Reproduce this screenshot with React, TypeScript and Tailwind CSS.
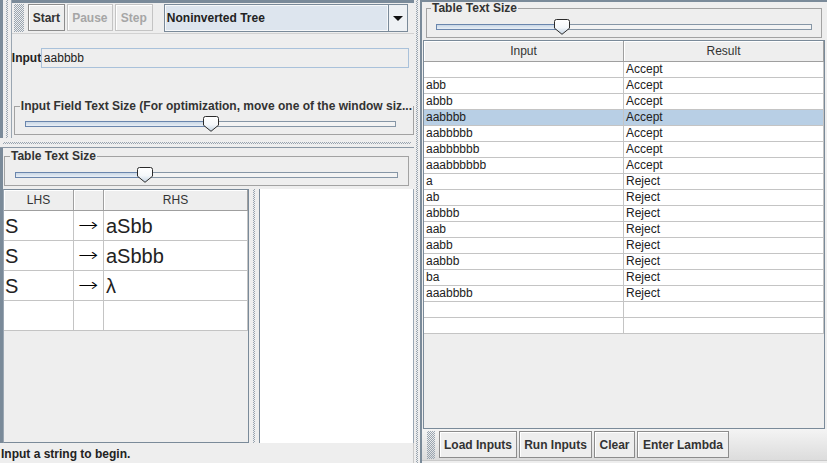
import React from "react";

function Bumps({ className }: { className: string }) {
  return (
    <div
      className={
        "bg-[repeating-conic-gradient(#98a4b0_0%_25%,transparent_0%_50%)] bg-[length:2px_2px] " +
        className
      }
    />
  );
}

function Thumb({ id }: { id: string }) {
  return (
    <svg width="16" height="16" viewBox="0 0 16 16">
      <defs>
        <linearGradient id={id} x1="0" y1="0" x2="0" y2="1">
          <stop offset="0" stopColor="#ffffff" />
          <stop offset="0.55" stopColor="#f4f7fa" />
          <stop offset="1" stopColor="#c3d3e3" />
        </linearGradient>
      </defs>
      <path
        d="M2.5 0.5 H13.5 Q15.5 0.5 15.5 2.5 V9.2 L8 15.3 L0.5 9.2 V2.5 Q0.5 0.5 2.5 0.5 Z"
        fill={`url(#${id})`}
        stroke="#2b2b2b"
        strokeWidth="1"
      />
    </svg>
  );
}

function Slider({ width, pos, id }: { width: number; pos: number; id: string }) {
  return (
    <div className="relative h-[16px]" style={{ width }}>
      <div className="absolute left-0 right-0 top-[5px] h-[6px] flex">
        <div
          className="h-full border border-r-0 border-[#6a86ad] bg-[linear-gradient(#c9d7e6,#e9eff6)]"
          style={{ width: pos + 8 }}
        />
        <div className="h-full flex-1 border border-l-0 border-[#8696a6] bg-[#f3f3f3]" />
      </div>
      <div className="absolute top-0" style={{ left: pos }}>
        <Thumb id={id} />
      </div>
    </div>
  );
}

function Btn({
  label,
  width,
  disabled,
}: {
  label: string;
  width: number;
  disabled?: boolean;
}) {
  return (
    <div
      className={
        disabled
          ? "h-[27px] flex items-center justify-center border border-[#c4c4c4] bg-[#eeeeee] font-bold text-[#a6a6a6] shadow-[inset_1px_1px_0_#ffffff]"
          : "h-[27px] flex items-center justify-center border border-[#8c8c8c] bg-[#eeeeee] font-bold text-[#333333] shadow-[inset_1px_1px_0_#ffffff]"
      }
      style={{ width }}
    >
      {label}
    </div>
  );
}

function TitledBox({
  title,
  className,
  legendClass,
  children,
}: {
  title: string;
  className: string;
  legendClass: string;
  children: React.ReactNode;
}) {
  return (
    <fieldset className={"border border-[#a2a2a2] pb-[2px] " + className}>
      <legend className={"px-[1px] font-bold whitespace-nowrap text-[#333333] " + legendClass}>
        {title}
      </legend>
      {children}
    </fieldset>
  );
}

const rows: [string, string][] = [
  ["", "Accept"],
  ["abb", "Accept"],
  ["abbb", "Accept"],
  ["aabbbb", "Accept"],
  ["aabbbbb", "Accept"],
  ["aabbbbbb", "Accept"],
  ["aaabbbbbb", "Accept"],
  ["a", "Reject"],
  ["ab", "Reject"],
  ["abbbb", "Reject"],
  ["aab", "Reject"],
  ["aabb", "Reject"],
  ["aabbb", "Reject"],
  ["ba", "Reject"],
  ["aaabbbb", "Reject"],
  ["", ""],
  ["", ""],
];

const grammar: [string, string, string][] = [
  ["S", "→", "aSbb"],
  ["S", "→", "aSbbb"],
  ["S", "→", "λ"],
  ["", "", ""],
];

export default function App() {
  return (
    <div className="w-[827px] h-[463px] bg-[#eeeeee] flex overflow-hidden text-[#333333] font-['Liberation_Sans',Arial,sans-serif] text-[12px] leading-[14px]">
      {/* LEFT COLUMN */}
      <div className="w-[414px] flex flex-col">
        {/* upper panel */}
        <div className="h-[138px] flex">
          <div className="w-[3px] bg-[#7a8a99]" />
          <div className="w-[9px] flex justify-center">
            <Bumps className="w-[2px] h-full" />
          </div>
          <div className="w-[1px] bg-[#9aa6b2]" />
          <div className="flex-1 flex flex-col border-t-[3px] border-[#7a8a99]">
            {/* toolbar */}
            <div className="h-[31px] flex items-start pt-[1px] pl-[2px] border-b border-[#d2d2d2]">
              <Bumps className="w-[10px] h-[28px]" />
              <div className="ml-[4px] flex gap-[2px]">
                <Btn label="Start" width={37} />
                <Btn label="Pause" width={46} disabled />
                <Btn label="Step" width={38} disabled />
              </div>
              <div className="ml-[11px] w-[244px] h-[28px] border border-[#7a8a99] flex bg-[#eeeeee]">
                <div className="flex-1 flex items-center pl-[1px] border border-[#f6f8fa] bg-[#dde5ee] font-bold text-[#222222]">
                  Noninverted Tree
                </div>
                <div className="w-[19px] border-l border-[#7a8a99] flex items-center justify-center bg-[#eef1f4]">
                  <svg width="10" height="5" viewBox="0 0 10 5">
                    <path d="M0 0H10L5 5Z" fill="#111111" />
                  </svg>
                </div>
              </div>
            </div>
            {/* input row */}
            <div className="mt-[14px] flex items-center h-[20px]">
              <div className="w-[29px] font-bold text-[#222222]">Input</div>
              <div className="w-[368px] h-[20px] border border-[#a9c1da] flex items-center pl-[2px] text-[#222222]">
                aabbbb
              </div>
            </div>
            <TitledBox
              title="Input Field Text Size (For optimization, move one of the window siz..."
              className="mt-[31px] ml-[2px] w-[392px]"
              legendClass="ml-[5px]"
            >
              <div className="mt-[3px] pl-[10px]">
                <Slider width={371} pos={178} id="t1" />
              </div>
            </TitledBox>
          </div>
        </div>
        {/* horizontal split divider */}
        <div className="h-[9px] flex items-center px-[3px]">
          <Bumps className="h-[2px] w-full" />
        </div>
        <div className="h-[1px] bg-[#8a97a4]" />
        {/* lower panel */}
        <div className="flex-1 flex">
          <div className="w-[3px] bg-[#7a8a99]" />
          <div className="flex-1 flex flex-col">
            <TitledBox
              title="Table Text Size"
              className="mt-[1px] ml-[1px] w-[405px]"
              legendClass="ml-[5px]"
            >
              <div className="mt-[4px] pl-[10px]">
                <Slider width={383} pos={122} id="t2" />
              </div>
            </TitledBox>
            <div className="mt-[3px] flex-1 flex">
              {/* grammar table */}
              <div className="w-[246px] border border-[#7a8a99] border-l-[#9aa6b2] flex flex-col">
                <div className="grid grid-cols-[70px_30px_144px] h-[21px]">
                  <div className="flex items-center justify-center border-r border-b border-[#9f9f9f] shadow-[inset_1px_1px_0_#ffffff]">
                    LHS
                  </div>
                  <div className="border-r border-b border-[#9f9f9f] shadow-[inset_1px_1px_0_#ffffff]" />
                  <div className="flex items-center justify-center border-r border-b border-[#9f9f9f] shadow-[inset_1px_1px_0_#ffffff]">
                    RHS
                  </div>
                </div>
                {grammar.map((g, i) => (
                  <div
                    key={i}
                    className="grid grid-cols-[70px_30px_144px] h-[30px] bg-white text-[20px] leading-[24px] text-[#222222]"
                  >
                    <div className="flex items-center pl-[1px] border-r border-b border-[#c4c4c4]">
                      {g[0]}
                    </div>
                    <div className="flex items-center pl-[4px] border-r border-b border-[#c4c4c4] overflow-hidden">
                      <span className="inline-block origin-left scale-x-[1.35] font-['DejaVu_Sans',sans-serif] font-extralight text-[18px] leading-[24px] text-black -translate-y-[1px]">
                        {g[1]}
                      </span>
                    </div>
                    <div className="flex items-center pl-[2px] border-r border-b border-[#c4c4c4]">
                      {g[2]}
                    </div>
                  </div>
                ))}
              </div>
              {/* vertical split divider */}
              <div className="w-[10px] flex justify-center">
                <Bumps className="w-[2px] h-full" />
              </div>
              <div className="w-[1px] bg-[#7a8a99]" />
              <div className="flex-1 bg-white border-r border-[#9aa6b2]" />
            </div>
          </div>
        </div>
        {/* status bar */}
        <div className="h-[20px] pt-[4px] pl-[1px] font-bold text-[#222222] whitespace-nowrap border-r border-[#c8c8c8]">
          Input a string to begin.
        </div>
      </div>

      {/* main split divider */}
      <div className="w-[6px] flex justify-center">
        <Bumps className="w-[2px] h-full" />
      </div>
      <div className="w-[2px] bg-[#7a8a99]" />

      {/* RIGHT COLUMN */}
      <div className="flex-1 flex flex-col">
        <div className="h-[2px] bg-[#7a8a99]" />
        <TitledBox
          title="Table Text Size"
          className="ml-[4px] w-[396px]"
          legendClass="ml-[4px] leading-[13px]"
        >
          <div className="mt-[4px] pl-[9px]">
            <Slider width={376} pos={118} id="t3" />
          </div>
        </TitledBox>
        <div className="mt-[2px] ml-[1px] w-[402px] flex-1 border border-[#7a8a99] flex flex-col">
          <div className="grid grid-cols-[200px_200px] h-[21px]">
            <div className="flex items-center justify-center border-r border-b border-[#9f9f9f] shadow-[inset_1px_1px_0_#ffffff]">
              Input
            </div>
            <div className="flex items-center justify-center border-r border-b border-[#9f9f9f] shadow-[inset_1px_1px_0_#ffffff]">
              Result
            </div>
          </div>
          {rows.map((r, i) => (
            <div
              key={i}
              className={
                i === 3
                  ? "grid grid-cols-[200px_200px] h-[16px] bg-[#b8cfe5] text-[#222222]"
                  : "grid grid-cols-[200px_200px] h-[16px] bg-white text-[#222222]"
              }
            >
              <div className="pl-[2px] leading-[15px] border-r border-b border-[#c4c4c4]">{r[0]}</div>
              <div className="pl-[2px] leading-[15px] border-r border-b border-[#c4c4c4]">{r[1]}</div>
            </div>
          ))}
        </div>
        {/* bottom toolbar */}
        <div className="h-[32px] flex items-start pt-[2px] border-b border-[#c9c9c9] bg-[linear-gradient(#f4f4f4,#dcdcdc)]">
          <Bumps className="ml-[5px] w-[8px] h-[28px]" />
          <div className="ml-[4px] flex gap-[2px]">
            <Btn label="Load Inputs" width={78} />
            <Btn label="Run Inputs" width={73} />
            <Btn label="Clear" width={41} />
            <Btn label="Enter Lambda" width={92} />
          </div>
        </div>
        <div className="h-[2px]" />
      </div>
    </div>
  );
}
